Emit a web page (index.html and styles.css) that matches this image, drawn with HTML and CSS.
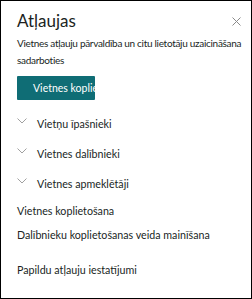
FILE: index.html
```html
<!DOCTYPE html>
<html lang="lv">
<head>
<meta charset="UTF-8">
<meta name="viewport" content="width=device-width, initial-scale=1.0">
<title>Atļaujas</title>
<link rel="stylesheet" href="styles.css">
</head>
<body>

<div class="panel">
    <div class="header">
        <h2 class="title">Atļaujas</h2>
        <button class="close" aria-label="Aizvērt">
            <svg width="9" height="9" viewBox="0 0 9 9"><path d="M0.5 0.5 L8.5 8.5 M8.5 0.5 L0.5 8.5" stroke="#8a8a8a" stroke-width="1" fill="none"/></svg>
        </button>
    </div>
    <p class="desc"><span class="nowrap">Vietnes atļauju pārvaldība un citu lietotāju uzaicināšana</span> sadarboties</p>

    <button class="share-btn">Vietnes koplietošana</button>

    <div class="groups">
        <div class="group">
            <svg class="chev" width="10" height="6" viewBox="0 0 10 6"><path d="M0.5 0.5 L5 5 L9.5 0.5" stroke="#a0a0a0" stroke-width="1" fill="none"/></svg>
            <span>Vietņu īpašnieki</span>
        </div>
        <div class="group">
            <svg class="chev" width="10" height="6" viewBox="0 0 10 6"><path d="M0.5 0.5 L5 5 L9.5 0.5" stroke="#a0a0a0" stroke-width="1" fill="none"/></svg>
            <span>Vietnes dalībnieki</span>
        </div>
        <div class="group">
            <svg class="chev" width="10" height="6" viewBox="0 0 10 6"><path d="M0.5 0.5 L5 5 L9.5 0.5" stroke="#a0a0a0" stroke-width="1" fill="none"/></svg>
            <span>Vietnes apmeklētāji</span>
        </div>
    </div>

    <a class="link first">Vietnes koplietošana</a>
    <a class="link">Dalībnieku koplietošanas veida mainīšana</a>
    <a class="link extra">Papildu atļauju iestatījumi</a>
</div>

</body>
</html>
```

FILE: styles.css
```css
body {
    margin: 0;
    font-family: Lato, "Noto Sans", sans-serif;
    color: #201f1e;
}
.panel {
    width: 252px;
    height: 299px;
    box-sizing: border-box;
    border: 1px solid #000;
    padding: 8px 10px 0 16px;
    background: #fff;
}
.header {
    display: flex;
    justify-content: space-between;
    align-items: center;
    height: 24px;
}
.title {
    margin: 0;
    font-size: 17px;
    font-weight: 400;
    line-height: 24px;
}
.close {
    border: none;
    background: none;
    padding: 0;
    display: flex;
}
.desc {
    margin: 2px 0 0 0;
    font-size: 10px;
    letter-spacing: -0.3px;
    line-height: 17px;
}
.nowrap {
    white-space: nowrap;
}
.share-btn {
    display: block;
    margin-top: 7px;
    width: 78px;
    height: 24px;
    padding: 0 0 0 16px;
    border: none;
    border-radius: 1px;
    background: #0f6d75;
    color: #fff;
    font-family: inherit;
    font-size: 10.5px;
    text-align: left;
    white-space: nowrap;
    overflow: hidden;
}
.groups {
    margin-top: 8px;
}
.group {
    display: flex;
    align-items: center;
    height: 30px;
    font-size: 10.7px;
}
.chev {
    margin-right: 10px;
    margin-top: -5px;
}
.link {
    display: block;
    font-size: 10.7px;
    line-height: 24px;
}
.link.first {
    margin-top: 1px;
}
.link.extra {
    margin-top: 11px;
}
```
